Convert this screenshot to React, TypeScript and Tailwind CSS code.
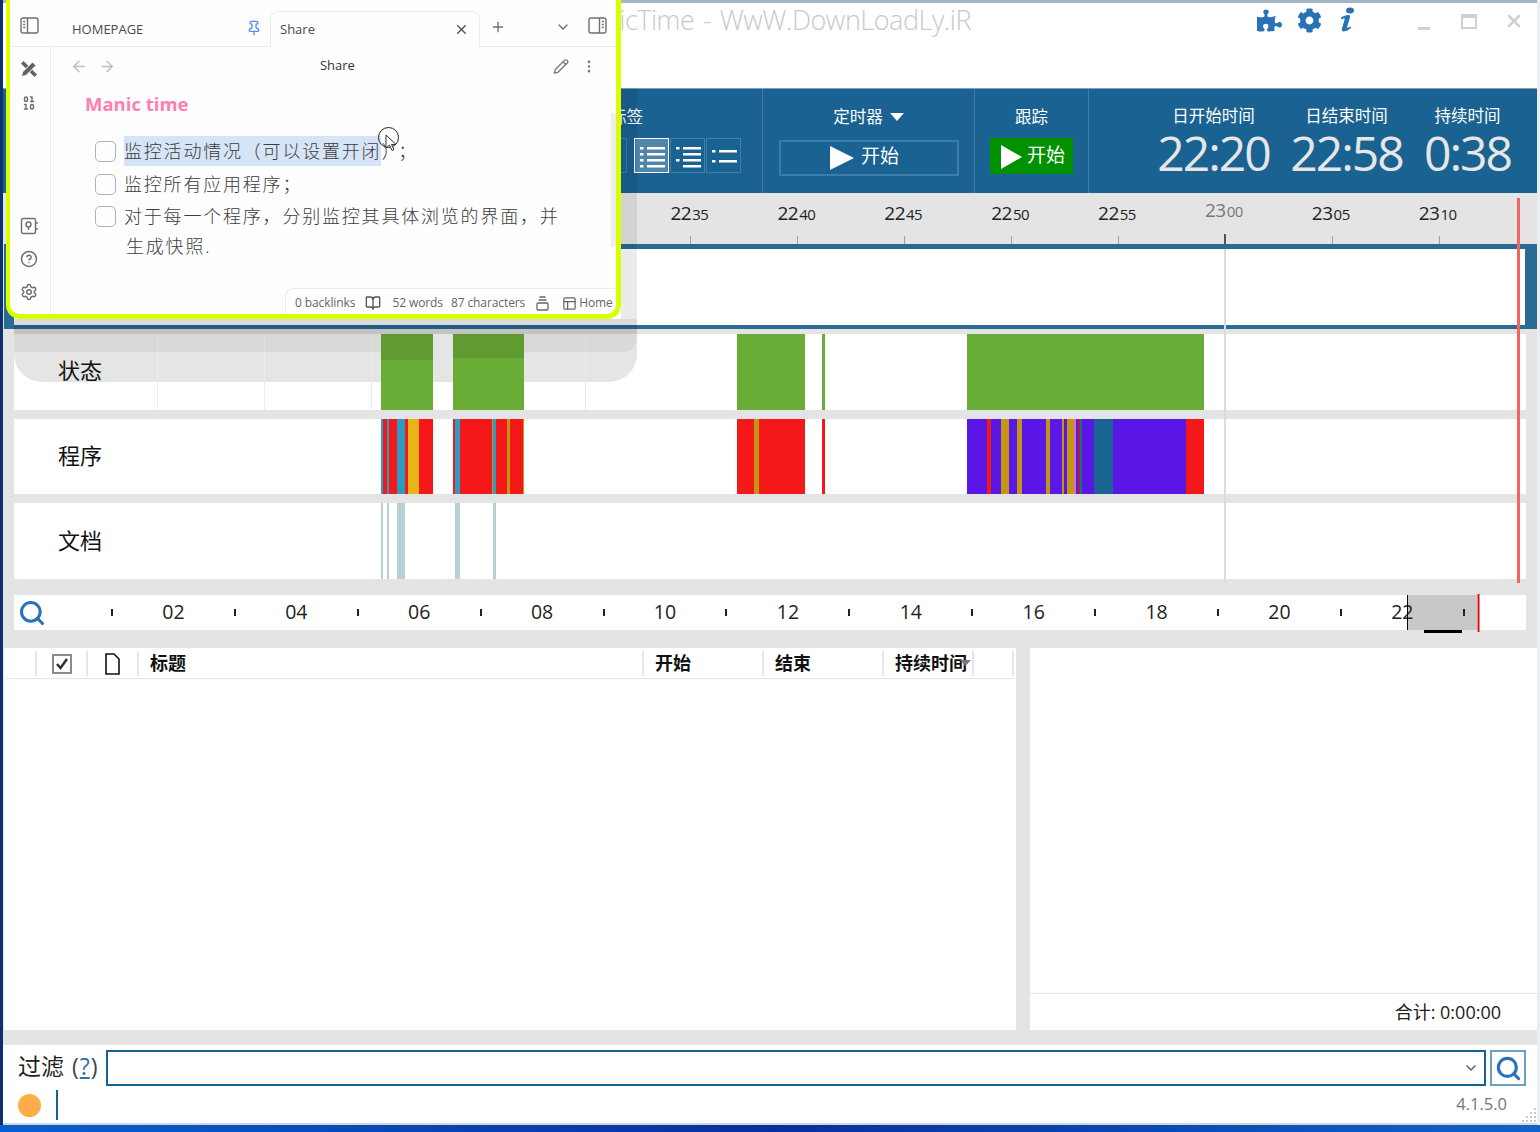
import { ArrowLeft, ArrowRight, BookOpen, ChevronDown, CircleHelp, EllipsisVertical, PanelsTopLeft, Pencil, Pin, Plus, Search, Settings, X, Binary } from 'lucide-react';
import { FaCog, FaPuzzlePiece } from 'react-icons/fa';

type Segment = [number, number, string];

const GREEN = '#6aad36';
const RED = '#f51818';
const BLUE = '#2b9cc3';
const GOLD = '#e8b418';
const OCHRE = '#c39512';
const PURPLE = '#5a16e6';
const TEAL = '#196491';
const DOC = '#b7d1d6';

const stateSegments: Segment[] = [
  [381, 433, GREEN],
  [453, 524, GREEN],
  [737, 805, GREEN],
  [822, 825, GREEN],
  [967, 1204, GREEN],
];

const programSegments: Segment[] = [
  [381, 383, BLUE], [383, 387, RED], [387, 389, BLUE], [389, 397, RED], [397, 405, BLUE], [405, 408, RED], [408, 419, GOLD], [419, 433, RED],
  [453, 455, RED], [455, 460, BLUE], [460, 492, RED], [492, 493, OCHRE], [493, 496, BLUE], [496, 507, RED], [507, 510, OCHRE], [510, 523, RED], [523, 524, OCHRE],
  [737, 754, RED], [754, 759, OCHRE], [759, 805, RED], [822, 825, RED],
  [967, 987, PURPLE], [987, 991, RED], [991, 1001, PURPLE], [1001, 1009, OCHRE], [1009, 1017, PURPLE], [1017, 1022, OCHRE], [1022, 1046, PURPLE],
  [1046, 1050, OCHRE], [1050, 1062, PURPLE], [1062, 1064, OCHRE], [1064, 1067, PURPLE], [1067, 1074, OCHRE], [1074, 1076, '#d46fd0'], [1076, 1078, PURPLE],
  [1078, 1080, '#b01c3c'], [1080, 1082, '#1c6f8c'], [1082, 1094, PURPLE], [1094, 1113, TEAL], [1113, 1186, PURPLE], [1186, 1204, RED],
];

const docSegments: Segment[] = [
  [381, 383, DOC], [387, 389, DOC], [397, 405, DOC], [455, 460, DOC], [493, 496, DOC],
];

const axisLabels = [
  { hour: '22', minute: '35' },
  { hour: '22', minute: '40' },
  { hour: '22', minute: '45' },
  { hour: '22', minute: '50' },
  { hour: '22', minute: '55' },
  { hour: '23', minute: '00', major: true },
  { hour: '23', minute: '05' },
  { hour: '23', minute: '10' },
];

const hours = ['02', '04', '06', '08', '10', '12', '14', '16', '18', '20', '22', ''];

function Track({ segments }: { segments: Segment[] }) {
  return (
    <>
      {segments.map(([from, to, color]) => (
        <div
          key={`${from}-${to}`}
          className="absolute inset-y-0"
          style={{ left: from - 14, width: to - from, backgroundColor: color }}
        />
      ))}
    </>
  );
}

function RowLabel({ children }: { children: string }) {
  return <span className="relative -mt-[2px] ml-[44px] text-[22px] text-[#111]">{children}</span>;
}

// the three list-density buttons in the header
function ListIcon({ rows, dots }: { rows: number[]; dots: number[] }) {
  return (
    <svg width="28" height="26" viewBox="0 0 28 26" fill="white">
      {rows.map((y) => (
        <rect key={y} x="9" y={y} width="18" height="2.5" />
      ))}
      {dots.map((y) => (
        <rect key={y} x="2" y={y} width="3.5" height="2.5" />
      ))}
    </svg>
  );
}

function SidebarIcon({ flip }: { flip?: boolean }) {
  return (
    <svg width="19" height="17" viewBox="0 0 19 17" fill="none" stroke="#6b6f76" strokeWidth="1.4" className={flip ? '-scale-x-100' : ''}>
      <rect x="1" y="1" width="17" height="15" rx="2" />
      <path d="M7.5 1v15M3.2 4.5h2M3.2 7.5h2M3.2 10.5h2" />
    </svg>
  );
}

function PlayButtonLabel({ size }: { size: 'big' | 'small' }) {
  const big = size === 'big';
  return (
    <>
      <svg width={big ? 24 : 21} height="24" viewBox="0 0 24 24" preserveAspectRatio="none" fill="white" className={big ? '' : 'mt-[2px]'}>
        <path d="M0 0l24 12L0 24z" />
      </svg>
      <span className={`text-[19px] text-white ${big ? '-mt-[3px] ml-[7px]' : '-mt-[1px] ml-[5px]'}`}>开始</span>
    </>
  );
}

function TimeColumn({ label, value, className }: { label: string; value: string; className: string }) {
  return (
    <div className={`flex flex-col items-center ${className}`}>
      <span className="text-[16.5px] leading-[24px] text-white">{label}</span>
      <span className="mt-[3px] text-[48px] leading-[44px] tracking-[-2px] text-[#e6e6e6]">{value}</span>
    </div>
  );
}

function Header() {
  return (
    <div className="flex h-[105px] shrink-0 border-t border-[#7fa3bb] bg-[#1a6291] text-white">
      <div className="flex w-[760px] flex-col items-end border-r border-[#3f7ea8] pr-[21px]">
        <span className="mr-[98px] mt-[16px] text-[16.5px] leading-[24px]">标签</span>
        <div className="mt-[9px] flex gap-[1px]">
          <div className="h-[35px] w-[8px] border border-[#3f7ea8]" />
          <div className="ml-[6px] flex h-[35px] w-[35px] items-center justify-center border border-white bg-[#5186ab]">
            <ListIcon rows={[4, 10, 16, 22]} dots={[4, 10, 16, 22]} />
          </div>
          <div className="flex h-[35px] w-[35px] items-center justify-center border border-[#3f7ea8]">
            <ListIcon rows={[4, 10, 16, 22]} dots={[4, 16]} />
          </div>
          <div className="flex h-[35px] w-[35px] items-center justify-center border border-[#3f7ea8]">
            <ListIcon rows={[7, 17]} dots={[7, 17]} />
          </div>
        </div>
      </div>

      <div className="flex w-[212px] flex-col items-center border-r border-[#3f7ea8]">
        <div className="mt-[16px] flex items-center text-[16.5px] leading-[24px]">
          定时器
          <svg width="14" height="8" viewBox="0 0 14 8" fill="white" className="ml-[7px]">
            <path d="M0 0h14L7 8z" />
          </svg>
        </div>
        <div className="mt-[11px] flex h-[36px] w-[180px] items-center justify-center border-2 border-[#3c7ca6] pr-[8px]">
          <PlayButtonLabel size="big" />
        </div>
      </div>

      <div className="flex w-[114px] flex-col items-center border-r border-[#3f7ea8]">
        <span className="mt-[16px] text-[16.5px] leading-[24px]">跟踪</span>
        <div className="mt-[9px] flex h-[36px] w-[83px] items-center justify-center bg-[#009100] pl-[3px]">
          <PlayButtonLabel size="small" />
        </div>
      </div>

      <div className="flex flex-1 pl-[58px] pt-[15px]">
        <TimeColumn label="日开始时间" value="22:20" className="w-[133px]" />
        <TimeColumn label="日结束时间" value="22:58" className="w-[133px]" />
        <TimeColumn label="持续时间" value="0:38" className="w-[109px]" />
      </div>
    </div>
  );
}

function TitleBar() {
  return (
    <div className="flex h-[85px] shrink-0 items-start bg-white">
      <div className="-mt-px w-[968px] whitespace-nowrap text-right text-[27px] font-light leading-[36px] tracking-[-0.47px] text-[#c9c9c9] [word-spacing:2px]">
        ManicTime - WwW.DownLoadLy.iR
      </div>
      <div className="ml-[286px] mt-[4px] flex items-center text-[#2873b8]">
        <FaPuzzlePiece size={25} />
        <FaCog size={25} className="ml-[15px]" />
        <svg width="18" height="26" viewBox="0 0 18 26" fill="#2873b8" className="ml-[15px]">
          <ellipse cx="13" cy="3.5" rx="4" ry="3" />
          <path d="M4 10.5c2.5-1.5 5-2.4 7.5-2.4 1.6 0 1.9 1 1.4 2.6l-2.7 9c-.3 1.1.4 1.3 1.3.9l2-1 .6 1.2c-2.4 2.2-4.8 3.6-7.3 3.6-1.8 0-2.3-1.2-1.8-3l2.6-8.8c.3-1.1-.3-1.4-1.2-1l-1.9.9z" />
        </svg>
      </div>
      <div className="ml-[63px] mt-[11px] flex items-start">
        <div className="mt-[13px] h-[3px] w-[12px] bg-[#d0d0d0]" />
        <div className="ml-[31px] h-[15px] w-[16px] border-2 border-t-[4px] border-[#d0d0d0]" />
        <X size={20} strokeWidth={3} className="ml-[27px] -mt-[3px] text-[#d0d0d0]" />
      </div>
    </div>
  );
}

function Axis() {
  return (
    <div className="flex h-[51px] shrink-0 pl-[634.5px]">
      {axisLabels.map(({ hour, minute, major }) => (
        <div key={hour + minute} className="flex w-[106.9px] flex-col items-center justify-end">
          <span className={`mr-[3px] whitespace-nowrap tracking-[-0.5px] ${major ? 'mb-[11px] text-[#777]' : 'mb-[10px] text-[#222]'}`}>
            <span className="text-[19px] leading-[24px]">{hour}</span>
            <span className="ml-[1px] text-[15px] leading-[24px]">{minute}</span>
          </span>
          <div className={major ? 'h-[10px] w-[2px] bg-[#555]' : 'h-[8px] w-px bg-[#a0a0a0]'} />
        </div>
      ))}
    </div>
  );
}

function Timeline() {
  return (
    <div className="relative shrink-0">
      <Axis />
      <div className="ml-px h-[85px] border-y-[5px] border-l-[10px] border-r-[12px] border-[#2a6b95] border-b-4 bg-white" />

      <div className="mx-[11px] mt-[5px] flex flex-col">
        <div className="relative flex h-[76px] items-center bg-white pb-[2px]">
          <div className="absolute left-0 top-0 h-[48px] w-[623px] rounded-b-[28px] bg-[#e5e5e5]" />
          <div className="absolute inset-y-0 left-[143px] w-px bg-[#ececec]" />
          <div className="absolute inset-y-0 left-[250px] w-px bg-[#ececec]" />
          <div className="absolute inset-y-0 left-[357px] w-px bg-[#ececec]" />
          <div className="absolute inset-y-0 left-[571px] w-px bg-[#ececec]" />
          <Track segments={stateSegments} />
          {/* window shadow falling on the first green bars */}
          <div className="absolute left-[367px] top-0 h-[26px] w-[52px] bg-black/10" />
          <div className="absolute left-[439px] top-0 h-[24px] w-[71px] bg-black/10" />
          <RowLabel>状态</RowLabel>
        </div>
        <div className="relative mt-[9px] flex h-[75px] items-center bg-white">
          <Track segments={programSegments} />
          <RowLabel>程序</RowLabel>
        </div>
        <div className="relative mt-[9px] flex h-[76px] items-center bg-white">
          <Track segments={docSegments} />
          <RowLabel>文档</RowLabel>
        </div>
      </div>

      {/* current time + hour marker run over all tracks */}
      <div className="absolute bottom-[-4px] left-[1221px] top-[56px] w-[2px] bg-[#dcdcdc]" />
      <div className="absolute bottom-[-4px] left-[1514px] top-[5px] w-[3px] bg-[#f06464]" />
    </div>
  );
}

function Overview() {
  return (
    <div className="relative mx-[11px] mt-[16px] flex h-[35px] shrink-0 items-center bg-white">
      <div className="absolute inset-y-0 left-[1393px] w-[71px] bg-[#c8c8c8]" />
      <div className="absolute -bottom-[3px] left-[1410px] h-[3px] w-[38px] bg-black" />
      <div className="absolute -bottom-[2px] -top-[1px] left-[1463px] w-[3px] border-x border-[#f58080] bg-[#c01820]" />
      <Search size={28} strokeWidth={2.6} className="relative ml-[4px] shrink-0 text-[#2873b8]" />
      <div className="relative ml-[65px] flex shrink-0 items-center">
        {hours.map((hour, i) => (
          <div key={i} className="flex w-[122.9px] items-center">
            <div className="h-[7px] w-[2px] bg-[#222]" />
            <span className="flex-1 pb-[2px] text-center text-[19.5px] leading-[26px] text-[#222]">{hour}</span>
          </div>
        ))}
      </div>
      <div className="absolute inset-y-0 left-[1393px] w-px bg-black" />
    </div>
  );
}

function TableHeaderCell({ children, className }: { children?: React.ReactNode; className: string }) {
  return (
    <div className={`flex h-[25px] items-center border-r-2 border-[#e6e6e6] ${className}`}>
      {children}
    </div>
  );
}

function Table() {
  return (
    <div className="mt-[18px] flex min-h-0 flex-1">
      <div className="ml-px w-[1012px] bg-white">
        <div className="mx-[2px] flex h-[31px] items-start border-b border-[#e4e4e4] pt-[3px] text-[18px] font-bold text-[#111]">
          <TableHeaderCell className="w-[31px]" />
          <TableHeaderCell className="w-[51px] justify-center">
            <div className="flex h-[20px] w-[20px] items-center justify-center border-2 border-[#8a8a8a]">
              <svg width="14" height="14" viewBox="0 0 14 14" fill="none" stroke="#333" strokeWidth="2.6">
                <path d="M2 7l3.5 4L12 2" />
              </svg>
            </div>
          </TableHeaderCell>
          <TableHeaderCell className="w-[51px] justify-center">
            <svg width="15" height="22" viewBox="0 0 15 22" fill="none" stroke="#111" strokeWidth="1.6">
              <path d="M1 1h8l5 5v15H1z" />
            </svg>
          </TableHeaderCell>
          <TableHeaderCell className="w-[505px] pl-[11px]">标题</TableHeaderCell>
          <TableHeaderCell className="w-[120px] pl-[11px]">开始</TableHeaderCell>
          <TableHeaderCell className="w-[120px] pl-[11px]">结束</TableHeaderCell>
          <TableHeaderCell className="relative w-[90px] whitespace-nowrap pl-[11px]">
            持续时间
            <svg width="11" height="6" viewBox="0 0 11 6" fill="#777" className="absolute right-[1px] top-[9px]">
              <path d="M0 0h11L5.5 6z" />
            </svg>
          </TableHeaderCell>
          <TableHeaderCell className="w-[40px]" />
        </div>
      </div>
      <div className="ml-[14px] flex flex-1 flex-col bg-white">
        <div className="mt-auto flex h-[37px] items-center justify-end border-t border-[#e4e4e4] pr-[36px] text-[18px] text-[#222]">
          合计: 0:00:00
        </div>
      </div>
    </div>
  );
}

function FilterBar() {
  return (
    <div className="relative mt-[15px] h-[78px] shrink-0 bg-white pt-[5px]">
      <div className="flex h-[36px] items-center">
        <span className="-mt-[4px] ml-[15px] flex w-[88px] items-baseline whitespace-nowrap text-[23px] text-[#222]">
          过滤
          <span className="ml-[8px] text-[#444]">(</span>
          <span className="px-px text-[#2c73a8] underline">?</span>
          <span className="text-[#444]">)</span>
        </span>
        <div className="flex h-[36px] w-[1380px] items-center justify-end border-2 border-[#1a6291] pr-[5px]">
          <ChevronDown size={16} strokeWidth={2.5} className="text-[#666]" />
        </div>
        <div className="ml-[4px] flex h-[36px] w-[36px] items-center justify-center border-2 border-[#6f9fc0]">
          <Search size={27} strokeWidth={2.8} className="text-[#2873b8]" />
        </div>
      </div>
      <div className="mt-[4px] flex h-[30px] items-start">
        <div className="ml-[15px] mt-[4px] h-[23px] w-[23px] rounded-full bg-[#ffad47]" />
        <div className="ml-[15px] h-[30px] w-[2px] bg-[#1a6291]" />
        <span className="ml-auto mr-[30px] mt-[2px] text-[16.5px] leading-[24px] text-[#777]">4.1.5.0</span>
      </div>
      {/* resize grip */}
      <svg width="16" height="16" viewBox="0 0 16 16" fill="#c4cbd0" className="absolute bottom-0 right-0">
        <rect x="13" y="1" width="2" height="2" />
        <rect x="9" y="5" width="2" height="2" />
        <rect x="13" y="5" width="2" height="2" />
        <rect x="5" y="9" width="2" height="2" />
        <rect x="9" y="9" width="2" height="2" />
        <rect x="13" y="9" width="2" height="2" />
        <rect x="1" y="13" width="2" height="2" />
        <rect x="5" y="13" width="2" height="2" />
        <rect x="9" y="13" width="2" height="2" />
        <rect x="13" y="13" width="2" height="2" />
      </svg>
    </div>
  );
}

function NoteWindow() {
  return (
    <div className="absolute left-[6px] top-0 flex h-[319px] w-[615px] flex-col overflow-hidden rounded-b-[14px] border-b-[5px] border-l-4 border-r-[5px] border-[#d9ff00] bg-[#fefefe] text-[#4a4a4a]">
      <div className="flex h-[47px] shrink-0 items-end border-b border-[#ececec]">
        <div className="mb-[12px] ml-[10px]"><SidebarIcon /></div>
        <span className="mb-[8px] ml-[33px] w-[174px] text-[13px] leading-[18px]">HOMEPAGE</span>
        <Pin size={16} className="mb-[10px] text-[#5b8def]" />
        <div className="-mb-px ml-[8px] flex h-[36px] w-[210px] items-center rounded-t-[8px] border border-b-0 border-[#ececec] bg-[#fefefe] pl-[9px] pr-[10px] text-[13px]">
          Share
          <X size={15} className="ml-auto" />
        </div>
        <Plus size={16} className="mb-[11px] ml-[10px] text-[#6b6f76]" />
        <ChevronDown size={16} className="mb-[11px] ml-[49px] text-[#6b6f76]" />
        <div className="mb-[12px] ml-[17px]"><SidebarIcon flip /></div>
      </div>

      <div className="flex min-h-0 flex-1">
        <div className="flex w-[41px] shrink-0 flex-col items-center border-r border-[#ececec] pr-[2px] pt-[13px] text-[#6b6f76]">
          <svg width="18" height="18" viewBox="0 0 18 18">
            <path d="M3.5 1L1 3.5 14.5 17 17 14.5z" fill="#5f6369" />
            <path d="M1.5 16.5l1-4.5L12.5 2l3.5 3.5-10 10z" fill="#5f6369" stroke="#fefefe" strokeWidth="1" />
          </svg>
          <Binary size={18} className="mt-[16px]" />
          <svg width="18" height="18" viewBox="0 0 18 18" fill="none" stroke="#6b6f76" strokeWidth="1.4" className="mt-auto">
            <rect x="1.5" y="1.5" width="14" height="15" rx="1.5" />
            <circle cx="8.5" cy="7.5" r="2.5" />
            <path d="M8.5 10v3M17 5v2M17 11v2" />
          </svg>
          <CircleHelp size={18} className="mt-[15px]" />
          <Settings size={18} className="mb-[13px] mt-[15px]" />
        </div>

        <div className="relative min-w-0 flex-1">
          <div className="flex h-[38px] items-center px-[19px]">
            <ArrowLeft size={19} className="text-[#bcc0c6]" />
            <ArrowRight size={19} className="ml-[10px] text-[#bcc0c6]" />
            <span className="ml-[204px] text-[13px] text-[#333]">Share</span>
            <Pencil size={17} className="ml-[198px] text-[#777]" />
            <EllipsisVertical size={17} className="ml-[12px] text-[#777]" />
          </div>
          <div className="ml-[34px] mt-[5px] text-[18.5px] font-bold leading-[28px] text-[#ff7eb0]">Manic time</div>
          <div className="ml-[44px] mt-[18px] flex items-center">
            <div className="h-[21px] w-[21px] rounded-[5px] border border-[#a9b2c0]" />
            <span className="ml-[8px] whitespace-nowrap text-[18px] font-light leading-[30px] tracking-[1.8px] text-[#3c3c3c]">
              <span className="bg-[#d6e4f8] py-[3px]">监控活动情况（可以设置开闭</span>）<span className="ml-[6px]">；</span>
            </span>
          </div>
          <div className="ml-[44px] mt-[3px] flex items-center">
            <div className="h-[21px] w-[21px] rounded-[5px] border border-[#a9b2c0]" />
            <span className="ml-[8px] whitespace-nowrap text-[18px] font-light leading-[30px] tracking-[1.8px] text-[#3c3c3c]">监控所有应用程序；</span>
          </div>
          <div className="ml-[44px] mt-[2px] flex items-start">
            <div className="mt-[5px] h-[21px] w-[21px] shrink-0 rounded-[5px] border border-[#a9b2c0]" />
            <span className="ml-[8px] w-[450px] text-[18px] font-light leading-[30px] tracking-[1.8px] text-[#3c3c3c]">
              对于每一个程序，分别监控其具体浏览的界面，并<br />
              <span className="ml-[2px]">生成快照.</span>
            </span>
          </div>

          <div className="absolute right-0 top-[66px] h-[134px] w-[5px] bg-[#eeeeee]" />

          {/* mouse pointer with click ring */}
          <div className="absolute left-[327px] top-[80px] h-[21px] w-[21px] rounded-full border border-[#222]" />
          <svg width="14" height="18" viewBox="0 0 14 18" className="absolute left-[334px] top-[87px]" fill="white" stroke="#333">
            <path d="M1 1v13l3.5-3 2.5 5.5 2-1-2.5-5H11z" />
          </svg>

          <div className="absolute bottom-0 right-0 flex h-[26px] w-[331px] items-center rounded-tl-[8px] border-l border-t border-[#ececec] pl-[9px] pt-[3px] text-[12px] tracking-[-0.1px] text-[#666]">
            0 backlinks
            <BookOpen size={16} className="ml-[10px] text-[#555]" />
            <span className="ml-[11px]">52 words</span>
            <span className="ml-[8px]">87 characters</span>
            <svg width="13" height="15" viewBox="0 0 13 15" fill="none" stroke="#666" strokeWidth="1.3" className="ml-[11px]">
              <path d="M3.5 1h6M2.5 4h8" />
              <rect x="1" y="7" width="11" height="7" rx="1" />
            </svg>
            <PanelsTopLeft size={15} className="ml-[13px] text-[#666]" />
            <span className="ml-[2px]">Home</span>
          </div>
        </div>
      </div>
    </div>
  );
}

export default function App() {
  return (
    <div className="relative flex h-[1132px] w-[1540px] flex-col overflow-hidden bg-[#e9eef2] font-['Open_Sans','Noto_Sans_CJK_SC',sans-serif]">
      <div className="flex min-h-0 flex-1">
        <div className="w-[3px] bg-[#0c2f6e]" />
        <div className="flex min-w-0 flex-1 flex-col border-b-2 border-t-[3px] border-b-[#cdd7df] border-t-[#a3b6c6] bg-[#e4e4e4]">
          <TitleBar />
          <Header />
          <Timeline />
          <Overview />
          <Table />
          <FilterBar />
        </div>
        <div className="w-[3px] bg-[#e9eef2]" />
      </div>
      <div className="h-[7px] bg-gradient-to-r from-[#0a5fd0] via-[#0a2f9c] to-[#1262c8]" />

      {/* drop shadow of the note window over the app behind it */}
      <div className="absolute left-[14px] top-[319px] h-[15px] w-[623px] bg-black/[0.14]" />
      <div className="absolute left-[14px] top-[334px] h-[18px] w-[367px] bg-black/[0.05]" />
      <div className="absolute left-[524px] top-[334px] h-[18px] w-[113px] rounded-br-[14px] bg-black/[0.05]" />
      <div className="absolute left-[621px] top-[88px] h-[231px] w-[16px] bg-black/[0.08]" />
      <NoteWindow />
    </div>
  );
}
